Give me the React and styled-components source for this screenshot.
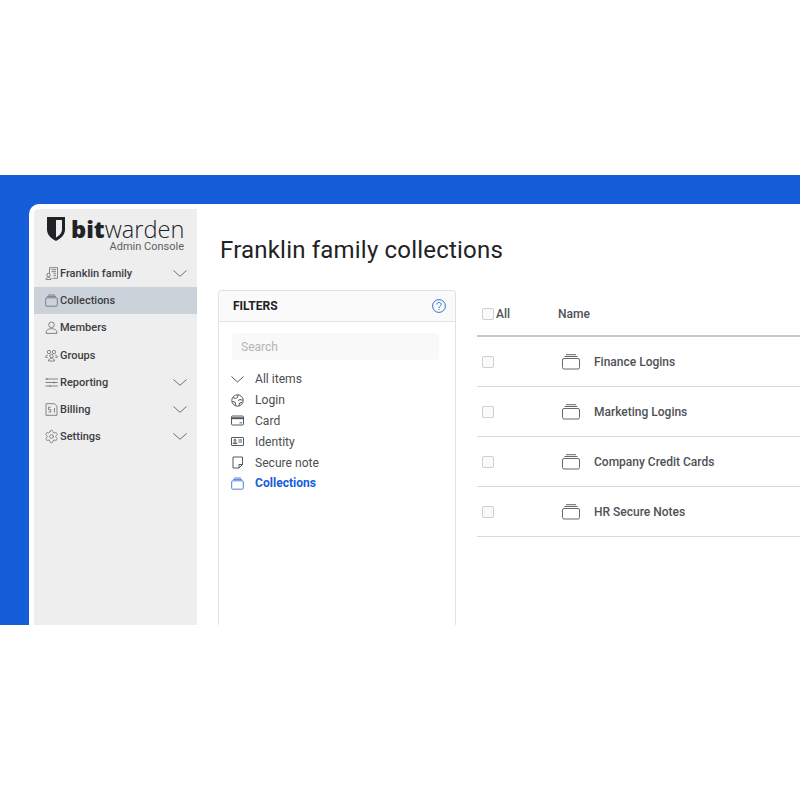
import React from 'react';
import styled, { createGlobalStyle } from 'styled-components';
import { Settings } from 'lucide-react';

const GlobalStyle = createGlobalStyle`
  html, body {
    margin: 0;
    padding: 0;
    background: #fff;
    font-family: Roboto, "Liberation Sans", sans-serif;
  }
`

const Page = styled.div`
  width: 800px;
  height: 800px;
  padding-top: 175px;
  box-sizing: border-box;
  overflow: hidden;
`
const Stage = styled.div`
  height: 450px;
  background: #155dd9;
  padding: 29px 0 0 29px;
  box-sizing: border-box;
  display: flex;
`
const Window = styled.div`
  flex: 1;
  background: #fff;
  border-radius: 10px 0 0 0;
  padding: 5px 0 0 5px;
  display: flex;
  min-width: 0;
  overflow: hidden;
`
const Sidebar = styled.aside`
  width: 163px;
  flex: none;
  background: #eeeeee;
  border-radius: 5px 0 0 0;
`
const Logo = styled.div`
  height: 51px;
  padding: 8px 13px 0 13px;
  box-sizing: border-box;
`
const LogoRow = styled.div`
  display: flex;
  align-items: center;
  height: 24px;
  color: #212226;
  font-family: "Open Sans", sans-serif;
  font-size: 23.6px;
  line-height: 24px;
`
const Shield = styled.svg`
  width: 18px;
  height: 24px;
  margin-right: 6px;
  flex: none;
`
const Bit = styled.span`
  font-weight: 800;
`
const Warden = styled.span`
  font-weight: 300;
`
const Console = styled.div`
  text-align: right;
  font-size: 11px;
  line-height: 11px;
  color: #5c5f63;
`
const NavItem = styled.div`
  height: 27.2px;
  display: flex;
  align-items: center;
  padding: 0 10px 0 11px;
  background: ${p => (p.$active ? '#ccd2d9' : 'transparent')};
  color: #3c3f43;
  font-size: 11px;
  font-weight: 500;
`
const NavIcon = styled.svg`
  width: 13px;
  height: 13px;
  margin-right: 2px;
  flex: none;
  fill: none;
  stroke: #66696e;
  stroke-width: 0.8;
`
const SettingsIcon = styled(Settings)`
  width: 15px;
  height: 15px;
  margin: 0 1px 0 -1px;
  flex: none;
  color: #66696e;
`
const NavLabel = styled.span`
  flex: 1;
`
const Chevron = styled.svg`
  width: 14px;
  height: 7px;
  flex: none;
  fill: none;
  stroke: #6b6f74;
  stroke-width: 1;
`
const Main = styled.main`
  flex: 1;
  min-width: 0;
  padding: 0 0 0 21px;
`
const Title = styled.h1`
  margin: 0;
  height: 81px;
  padding: 25px 0 0 2px;
  box-sizing: border-box;
  font-size: 24px;
  font-weight: 400;
  line-height: 32px;
  letter-spacing: 0.2px;
  color: #212226;
`
const Columns = styled.div`
  display: flex;
  align-items: stretch;
  height: 340px;
`
const FilterPanel = styled.section`
  width: 238px;
  flex: none;
  box-sizing: border-box;
  border: 1px solid #e2e2e2;
  border-bottom: none;
  border-radius: 4px 4px 0 0;
`
const FilterHeader = styled.div`
  height: 30px;
  display: flex;
  align-items: center;
  justify-content: space-between;
  padding: 0 9px 0 14px;
  background: #fafafa;
  border-bottom: 1px solid #e4e4e4;
  border-radius: 4px 4px 0 0;
  font-size: 12px;
  font-weight: 700;
  color: #212226;
`
const HelpIcon = styled.svg`
  width: 14px;
  height: 14px;
  fill: none;
  stroke: #2f6fd6;
  stroke-width: 1;
`
const Search = styled.div`
  height: 27px;
  margin: 11px 16px 9px 13px;
  padding-left: 9px;
  display: flex;
  align-items: center;
  background: #f9f9f9;
  border-radius: 3px;
  font-size: 12px;
  color: #b4b4b4;
`
const FilterList = styled.div`
  display: flex;
  flex-direction: column;
  padding-left: 12px;
`
const FilterItem = styled.div`
  height: 20.8px;
  display: flex;
  align-items: center;
  gap: 11px;
  font-size: 12.1px;
  font-weight: ${p => (p.$active ? 700 : 400)};
  color: ${p => (p.$active ? '#175ddc' : '#4c4f53')};
`
const FilterIcon = styled.svg`
  width: 13px;
  height: 13px;
  flex: none;
  fill: none;
  stroke: ${p => p.$color || '#55595e'};
  stroke-width: 1;
`
const Table = styled.section`
  flex: 1;
  margin-left: 21px;
  min-width: 0;
`
const HeaderRow = styled.div`
  height: 44px;
  margin-top: 1px;
  padding-top: 1px;
  box-sizing: content-box;
  height: 43px;
  display: flex;
  align-items: center;
  padding-left: 5px;
  border-bottom: 2px solid #c9c9c9;
  font-size: 12px;
  font-weight: 500;
  color: #4f5256;
`
const Row = styled.div`
  height: 49px;
  display: flex;
  align-items: center;
  padding-left: 5px;
  border-bottom: 1px solid #d9d9d9;
  font-size: 12px;
  font-weight: 500;
  color: #4f5256;
`
const Check = styled.span`
  width: 10px;
  height: 10px;
  flex: none;
  border: 1px solid #d0d0d0;
  border-radius: 2px;
  background: #fafafa;
`
const AllLabel = styled.span`
  margin-left: 2px;
  width: 62px;
`
const RowIcon = styled.svg`
  width: 18px;
  height: 16px;
  margin-left: 68px;
  margin-right: 14px;
  flex: none;
  fill: none;
  stroke: #66696e;
  stroke-width: 1;
`

const CollectionShape = () => (
  <>
    <rect x="0.7" y="3.800" width="11.600" height="8.400" rx="1" />
    <path d="M2 2.400h9M3.200 1h6.600" />
  </>
)

const navItems = [
  {
    label: 'Franklin family',
    chevron: true,
    icon: (
      <>
        <path d="M4.500 6.500V.7h8v10.600H7.500M6.500 2.700h4.500M6.500 4.700h4.500M8.500 6.700h2.500M8.500 8.700h2.500" />
        <circle cx="3.500" cy="8" r="1.700" />
        <path d="M1 12.500v-.5c0-1 1-1.600 2.500-1.600S6 11 6 12v.5z" />
      </>
    ),
  },
  { label: 'Collections', active: true, icon: <CollectionShape /> },
  {
    label: 'Members',
    icon: (
      <>
        <circle cx="6.500" cy="3.800" r="2.800" />
        <path d="M1.200 12.400v-1.400c0-2 2.200-3.300 5.300-3.300s5.300 1.300 5.300 3.300v1.400z" />
      </>
    ),
  },
  {
    label: 'Groups',
    icon: (
      <>
        <circle cx="4" cy="3" r="1.700" />
        <circle cx="9" cy="3" r="1.700" />
        <circle cx="6.500" cy="7" r="1.700" />
        <path d="M2.800 6C1.500 6.300.6 7 .6 8.300h2.200M10.200 6c1.300.3 2.200 1 2.200 2.300h-2.200M3.500 12c0-1.700 1.200-2.700 3-2.700s3 1 3 2.700z" />
      </>
    ),
  },
  {
    label: 'Reporting',
    chevron: true,
    icon: <path d="M.5 3h12.500M.5 6.500h12.500M.5 10h12.500M2 2v2M9 5.500v2M5 9v2" />,
  },
  {
    label: 'Billing',
    chevron: true,
    icon: (
      <>
        <path d="M1 .7h8.500l2.500 2.500v9.100H1z" />
        <path d="M5.800 4.200H3.500v2.400h2.300v2.400H3.500M9.500 5v4.500" />
      </>
    ),
  },
  { label: 'Settings', chevron: true, gear: true },
]

const filters = [
  { label: 'All items', icon: <path d="M.5 3.500l6 5.500 6-5.500" /> },
  {
    label: 'Login',
    icon: (
      <>
        <circle cx="6.500" cy="6.500" r="5.700" />
        <path d="M2 3.500l2.500 1 2-1 .5-2.800M1 7.500l3 .5 1 3.800M7 6.500l2-1 3 .8M8 12l.5-3 2.500-.5" />
      </>
    ),
  },
  {
    label: 'Card',
    icon: (
      <>
        <rect x="0.5" y="2" width="12" height="9" rx="1" />
        <path d="M.5 4.200h12" strokeWidth="2" />
        <path d="M8.500 8.800h2.500" />
      </>
    ),
  },
  {
    label: 'Identity',
    icon: (
      <>
        <rect x="0.5" y="2.500" width="12" height="8" rx="0.5" />
        <circle cx="4" cy="5.200" r="1" />
        <path d="M2.200 8.600c0-1 .8-1.500 1.800-1.500s1.800.5 1.800 1.500zM7.500 5h3.500M7.500 7h3.500" />
      </>
    ),
  },
  {
    label: 'Secure note',
    icon: <path d="M2 1h9.500v7.500L8 12H2zM11.500 8.500H8V12" />,
  },
  {
    label: 'Collections',
    active: true,
    color: '#4a83e0',
    icon: <CollectionShape />,
  },
]

const rows = ['Finance Logins', 'Marketing Logins', 'Company Credit Cards', 'HR Secure Notes']

const App = () => (
  <Page>
    <GlobalStyle />
    <Stage>
      <Window>
        <Sidebar>
          <Logo>
            <LogoRow>
              <Shield viewBox="0 0 18 24">
                <path
                  fill="#212226"
                  fillRule="evenodd"
                  d="M0 0h18v12.500c0 5.500-4.500 9-9 11.500-4.500-2.500-9-6-9-11.500zM9 3v17.500c3-1.800 6-4.400 6-8V3z"
                />
              </Shield>
              <Bit>bit</Bit>
              <Warden>warden</Warden>
            </LogoRow>
            <Console>Admin Console</Console>
          </Logo>
          {navItems.map(item => (
            <NavItem key={item.label} $active={item.active}>
              {item.gear ? (
                <SettingsIcon strokeWidth={1.2} />
              ) : (
                <NavIcon viewBox="0 0 13 13">{item.icon}</NavIcon>
              )}
              <NavLabel>{item.label}</NavLabel>
              {item.chevron && (
                <Chevron viewBox="0 0 14 7">
                  <path d="M.5.5L7 6.300 13.500.5" />
                </Chevron>
              )}
            </NavItem>
          ))}
        </Sidebar>
        <Main>
          <Title>Franklin family collections</Title>
          <Columns>
            <FilterPanel>
              <FilterHeader>
                FILTERS
                <HelpIcon viewBox="0 0 14 14">
                  <circle cx="7" cy="7" r="6.400" />
                  <path d="M5 5.500C5 4 6 3.400 7 3.400s2.200.7 2.200 2c0 1.800-2.200 1.800-2.200 3.600M7 10v1" />
                </HelpIcon>
              </FilterHeader>
              <Search>Search</Search>
              <FilterList>
                {filters.map(f => (
                  <FilterItem key={f.label} $active={f.active}>
                    <FilterIcon viewBox="0 0 13 13" $color={f.color}>
                      {f.icon}
                    </FilterIcon>
                    {f.label}
                  </FilterItem>
                ))}
              </FilterList>
            </FilterPanel>
            <Table>
              <HeaderRow>
                <Check />
                <AllLabel>All</AllLabel>
                Name
              </HeaderRow>
              {rows.map(name => (
                <Row key={name}>
                  <Check />
                  <RowIcon viewBox="0 0 18 16">
                    <rect x="0.5" y="4.500" width="17" height="10.500" rx="1.500" />
                    <path d="M2.500 2.500h13M4 .7h10" />
                  </RowIcon>
                  {name}
                </Row>
              ))}
            </Table>
          </Columns>
        </Main>
      </Window>
    </Stage>
  </Page>
)

export default App
